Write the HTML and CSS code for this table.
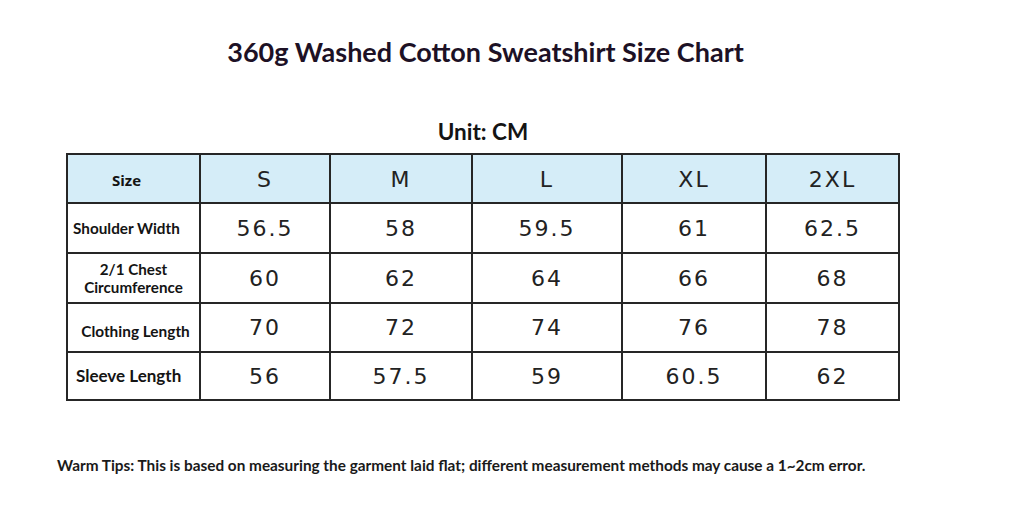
FILE: index.html
```html
<!DOCTYPE html>
<html lang="en">
<head>
<meta charset="utf-8">
<title>360g Washed Cotton Sweatshirt Size Chart</title>
<link rel="stylesheet" href="styles.css">
</head>
<body>
<main class="page">
  <h1 class="title">360g Washed Cotton Sweatshirt Size Chart</h1>
  <div class="unit">Unit: CM</div>
  <table class="chart">
    <colgroup>
      <col class="c-label"><col class="c-s"><col class="c-m"><col class="c-l"><col class="c-xl"><col class="c-2xl">
    </colgroup>
    <thead>
      <tr class="row-head">
        <th class="label">Size</th><th>S</th><th>M</th><th>L</th><th>XL</th><th>2XL</th>
      </tr>
    </thead>
    <tbody>
      <tr class="row-1">
        <th class="label label-left">Shoulder Width</th><td>56.5</td><td>58</td><td>59.5</td><td>61</td><td>62.5</td>
      </tr>
      <tr class="row-2">
        <th class="label label-two">2/1 Chest<br>Circumference</th><td>60</td><td>62</td><td>64</td><td>66</td><td>68</td>
      </tr>
      <tr class="row-3">
        <th class="label label-shift">Clothing Length</th><td>70</td><td>72</td><td>74</td><td>76</td><td>78</td>
      </tr>
      <tr class="row-4">
        <th class="label label-sleeve">Sleeve Length</th><td>56</td><td>57.5</td><td>59</td><td>60.5</td><td>62</td>
      </tr>
    </tbody>
  </table>
  <p class="tips">Warm Tips: This is based on measuring the garment laid flat; different measurement methods may cause a 1~2cm error.</p>
</main>
</body>
</html>
```
FILE: styles.css
```css
html, body {
  margin: 0;
  padding: 0;
  background: #ffffff;
}

.page {
  width: 1030px;
  height: 506px;
  display: flex;
  flex-direction: column;
  padding: 0;
  box-sizing: border-box;
  font-family: Lato, "Open Sans", "Liberation Sans", sans-serif;
}

.title {
  margin: 36px 0 0 0;
  font-family: Lato, sans-serif;
  font-weight: 700;
  font-size: 27px;
  line-height: 32px;
  color: #1d1125;
  text-align: center;
  width: 971px;
}

.unit {
  margin: 50px 0 0 0;
  width: 966px;
  text-align: center;
  font-family: Lato, sans-serif;
  font-weight: 700;
  font-size: 22.5px;
  line-height: 28px;
  color: #141414;
}

.chart {
  margin: 7px 0 0 66px;
  border-collapse: collapse;
  table-layout: fixed;
  width: 833px;
  border: 2px solid #262626;
}

.c-label { width: 133px; }
.c-s { width: 130px; }
.c-m { width: 142px; }
.c-l { width: 150px; }
.c-xl { width: 144px; }
.c-2xl { width: 133px; }

.chart th,
.chart td {
  border: 2px solid #262626;
  padding: 0;
  text-align: center;
  vertical-align: middle;
  font-family: "DejaVu Sans", sans-serif;
  font-weight: 400;
  font-size: 22px;
  letter-spacing: 2px;
  color: #222222;
}

.row-head th {
  background: #d5edf8;
  height: 45px;
  padding-top: 2px;
}

.row-1 td, .row-1 th { height: 48px; }
.row-2 td, .row-2 th { height: 48px; }
.row-3 td, .row-3 th { height: 47px; }
.row-3 th { height: 41px; }
.row-4 td, .row-4 th { height: 46px; }

.chart .label {
  font-family: Lato, "Open Sans", sans-serif;
  font-weight: 700;
  font-size: 15px;
  letter-spacing: 0;
  color: #141414;
  line-height: 18px;
}

.row-head .label {
  font-family: "Open Sans", sans-serif;
  font-size: 15px;
  padding-right: 14px;
}

.chart .label-left {
  text-align: left;
  padding-left: 5px;
  font-size: 15.3px;
}

.chart .label-two {
  font-size: 15.2px;
  line-height: 18px;
}

.chart .label-shift {
  font-size: 15.4px;
  padding-left: 4px;
  padding-top: 6px;
}

.chart .label-sleeve {
  text-align: left;
  padding-left: 8px;
  font-size: 17px;
}

.tips {
  margin: 55px 0 0 57px;
  font-family: Lato, sans-serif;
  font-weight: 700;
  font-size: 15.35px;
  line-height: 18px;
  color: #1a1a1a;
}
```
